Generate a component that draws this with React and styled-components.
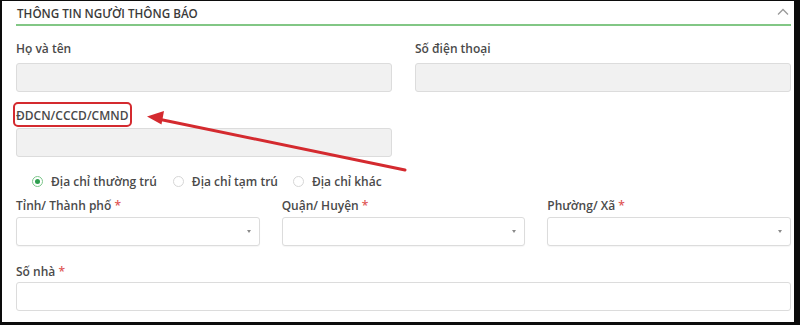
import React from 'react';
import styled, { createGlobalStyle } from 'styled-components';

const GlobalStyle = createGlobalStyle`
  html, body {
    margin: 0;
    padding: 0;
    background: #0c0c0c;
  }
  body {
    width: 800px;
    height: 325px;
    overflow: hidden;
    font-family: "Open Sans", "Noto Sans", sans-serif;
  }
`;

const Panel = styled.div`
  position: relative;
  box-sizing: border-box;
  width: 792px;
  height: 321px;
  margin: 1px 0 0 2px;
  padding: 0 3px 0 14px;
  background: #fff;
`;

const Header = styled.div`
  display: flex;
  align-items: center;
  justify-content: space-between;
  height: 23px;
  border-bottom: 2px solid #82c785;
`;

const Title = styled.h3`
  margin: 0 0 0 1px;
  font-size: 11.7px;
  font-weight: 600;
  color: #3a3a3a;
  text-transform: uppercase;
`;

const Chevron = styled.svg`
  width: 12px;
  height: 8px;
  margin-right: 2px;
  margin-top: -2px;
`;

const Grid = styled.div`
  display: grid;
  grid-template-columns: repeat(${(p) => p.$cols}, 1fr);
  column-gap: ${(p) => (p.$cols === 3 ? 22 : 23)}px;
  margin-top: ${(p) => p.$top}px;
`;

const Field = styled.div`
  display: flex;
  flex-direction: column;
`;

const Label = styled.label`
  position: relative;
  align-self: flex-start;
  font-size: 12px;
  line-height: 16px;
  font-weight: 600;
  color: #4a4a4a;
  margin-bottom: ${(p) => p.$gap ?? 3}px;
`;

const Required = styled.span`
  color: #e05656;
`;

const Highlight = styled.span`
  position: absolute;
  left: -3px;
  right: -4px;
  top: -6px;
  bottom: -3px;
  border: 2px solid #d42a2f;
  border-radius: 5px;
  pointer-events: none;
`;

const TextBox = styled.div`
  box-sizing: border-box;
  height: 29px;
  border: 1px solid #dcdcdc;
  border-radius: 3px;
  background: ${(p) => (p.$disabled ? '#f1f1f1' : '#fff')};
`;

const SelectBox = styled(TextBox)`
  display: flex;
  align-items: center;
  justify-content: flex-end;
  padding-right: 8px;
  box-shadow: 0 1px 1px rgba(0, 0, 0, 0.04);
`;

const Caret = styled.span`
  width: 0;
  height: 0;
  border-left: 2.5px solid transparent;
  border-right: 2.5px solid transparent;
  border-top: 3px solid #8a8a8a;
`;

const RadioRow = styled.div`
  display: flex;
  align-items: center;
  height: 16px;
  margin-top: 16px;
  padding-left: 16px;
`;

const RadioItem = styled.div`
  display: flex;
  align-items: center;
  gap: 8px;
  margin-right: ${(p) => p.$space}px;
  font-size: 12px;
  font-weight: 600;
  color: #4a4a4a;
`;

const RadioCircle = styled.span`
  box-sizing: border-box;
  width: 11px;
  height: 11px;
  border-radius: 50%;
  border: 1px solid ${(p) => (p.$checked ? '#7cc68a' : '#d6d6d6')};
  display: flex;
  align-items: center;
  justify-content: center;

  &::after {
    content: '';
    width: 5px;
    height: 5px;
    border-radius: 50%;
    background: ${(p) => (p.$checked ? '#2f9e4f' : 'transparent')};
  }
`;

const Arrow = styled.svg`
  position: absolute;
  left: 0;
  top: 0;
  width: 100%;
  height: 100%;
  pointer-events: none;
`;

const Select = () => (
  <SelectBox>
    <Caret />
  </SelectBox>
);

const App = () => (
  <>
    <GlobalStyle />
    <Panel>
      <Header>
        <Title>Thông tin người thông báo</Title>
        <Chevron viewBox="0 0 12 8">
          <path d="M1 6.5 L6 1.5 L11 6.5" fill="none" stroke="#9a9a9a" strokeWidth="1.3" />
        </Chevron>
      </Header>

      <Grid $cols={2} $top={15}>
        <Field>
          <Label $gap={6}>Họ và tên</Label>
          <TextBox $disabled />
        </Field>
        <Field>
          <Label $gap={6}>Số điện thoại</Label>
          <TextBox $disabled />
        </Field>
      </Grid>

      <Grid $cols={2} $top={16}>
        <Field>
          <Label $gap={4}>
            ĐDCN/CCCD/CMND
            <Highlight />
          </Label>
          <TextBox $disabled />
        </Field>
      </Grid>

      <RadioRow>
        <RadioItem $space={16}>
          <RadioCircle $checked />
          Địa chỉ thường trú
        </RadioItem>
        <RadioItem $space={15}>
          <RadioCircle />
          Địa chỉ tạm trú
        </RadioItem>
        <RadioItem $space={0}>
          <RadioCircle />
          Địa chỉ khác
        </RadioItem>
      </RadioRow>

      <Grid $cols={3} $top={9}>
        <Field>
          <Label>
            Tỉnh/ Thành phố <Required>*</Required>
          </Label>
          <Select />
        </Field>
        <Field>
          <Label>
            Quận/ Huyện <Required>*</Required>
          </Label>
          <Select />
        </Field>
        <Field>
          <Label>
            Phường/ Xã <Required>*</Required>
          </Label>
          <Select />
        </Field>
      </Grid>

      <Grid $cols={1} $top={18}>
        <Field>
          <Label $gap={2}>
            Số nhà <Required>*</Required>
          </Label>
          <TextBox />
        </Field>
      </Grid>

      <Arrow viewBox="0 0 792 321">
        <line x1="403" y1="169" x2="156" y2="118" stroke="#d42a2f" strokeWidth="3" strokeLinecap="round" />
        <polygon points="145,115.5 162,110 159.5,123.5" fill="#d42a2f" />
      </Arrow>
    </Panel>
  </>
);

export default App;
